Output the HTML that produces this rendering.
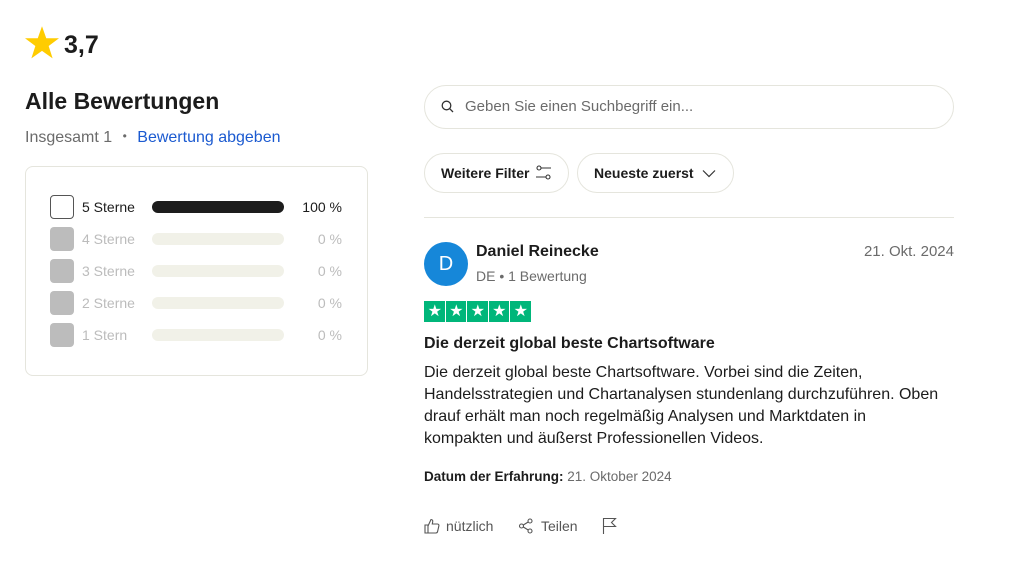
<!DOCTYPE html>
<html><head><meta charset="utf-8"><style>
*{margin:0;padding:0;box-sizing:border-box}
body{width:1016px;height:571px;background:#fff;font-family:"Liberation Sans",Arial,sans-serif;color:#1c1c1c;position:relative;overflow:hidden}
.a{position:absolute;white-space:nowrap}
.row{position:absolute;left:50px;height:24px;width:300px}
.cb{position:absolute;left:0;top:0;width:24px;height:24px;border-radius:4px;background:#bcbcbc}
.lb{position:absolute;left:32px;top:4px;font-size:14px;color:#bcbcbc}
.bar{position:absolute;left:102px;top:6px;width:132px;height:12px;border-radius:6px;background:#f1f1e8}
.pc{position:absolute;right:8px;top:4px;font-size:14px;color:#bcbcbc}
.btn{position:absolute;top:153px;height:40px;border:1px solid #e5e5dd;border-radius:20px;font-size:14px;font-weight:bold;padding:11px 0 0 16px}
.st{position:absolute;top:301px;width:20.5px;height:21px;background:#00b67a}
</style></head><body>
<svg class="a" style="left:25px;top:26px" width="34" height="33" viewBox="0 0 24 23"><path d="M12 0l3 8.5h9l-7.3 5.5 2.8 8.7L12 17.4l-7.5 5.3 2.8-8.7L0 8.5h9z" fill="#ffcc00"/></svg>
<div class="a" style="left:64px;top:31px;font-size:25px;font-weight:bold">3,7</div>
<div class="a" style="left:25px;top:88px;font-size:23px;font-weight:bold">Alle Bewertungen</div>
<div class="a" style="left:25px;top:129px;font-size:16px;color:#6b6b6b">Insgesamt 1 <span style="margin:0 6px;font-size:12px;position:relative;top:-2px">•</span> <span style="color:#1b5ad0">Bewertung abgeben</span></div>
<div class="a" style="left:25px;top:166px;width:343px;height:210px;border:1px solid #e5e5dd;border-radius:8px"></div>
<div class="row" style="top:195px"><div class="cb" style="background:#fff;border:1px solid #555"></div><div class="lb" style="color:#1c1c1c">5 Sterne</div><div class="bar" style="background:#1c1c1c"></div><div class="pc" style="color:#1c1c1c">100 %</div></div>
<div class="row" style="top:227px"><div class="cb"></div><div class="lb">4 Sterne</div><div class="bar"></div><div class="pc">0 %</div></div>
<div class="row" style="top:259px"><div class="cb"></div><div class="lb">3 Sterne</div><div class="bar"></div><div class="pc">0 %</div></div>
<div class="row" style="top:291px"><div class="cb"></div><div class="lb">2 Sterne</div><div class="bar"></div><div class="pc">0 %</div></div>
<div class="row" style="top:323px"><div class="cb"></div><div class="lb">1 Stern</div><div class="bar"></div><div class="pc">0 %</div></div>

<div class="a" style="left:424px;top:85px;width:530px;height:44px;border:1px solid #e5e5dd;border-radius:22px"></div>
<svg class="a" style="left:441px;top:100px" width="13" height="13" viewBox="0 0 13 13"><circle cx="5.5" cy="5.5" r="4.3" fill="none" stroke="#333" stroke-width="1.3"/><path d="M8.6 8.6L12 12" stroke="#333" stroke-width="1.3"/></svg>
<div class="a" style="left:465px;top:98px;font-size:15px;color:#6b6b6b">Geben Sie einen Suchbegriff ein...</div>
<div class="btn" style="left:424px;width:145px">Weitere Filter</div>
<svg class="a" style="left:535px;top:164px" width="18" height="18" viewBox="0 0 18 18"><circle cx="4" cy="4" r="2" fill="none" stroke="#333" stroke-width="1.1"/><path d="M6 4h10M1 13h10" stroke="#333" stroke-width="1.1"/><circle cx="13" cy="13" r="2" fill="none" stroke="#333" stroke-width="1.1"/></svg>
<div class="btn" style="left:577px;width:157px">Neueste zuerst</div>
<svg class="a" style="left:702px;top:169px" width="14" height="9" viewBox="0 0 14 9"><path d="M1 1.5l6 6 6-6" fill="none" stroke="#333" stroke-width="1.2"/></svg>
<div class="a" style="left:424px;top:217px;width:530px;height:1px;background:#e5e5dd"></div>

<div class="a" style="left:424px;top:242px;width:44px;height:44px;border-radius:50%;background:#1687d9;color:#fff;font-size:20px;text-align:center;line-height:44px">D</div>
<div class="a" style="left:476px;top:243px;font-size:16px;font-weight:bold">Daniel Reinecke</div>
<div class="a" style="left:476px;top:268px;font-size:14px;color:#6b6b6b">DE • 1 Bewertung</div>
<div class="a" style="right:62px;top:243px;font-size:15px;color:#6b6b6b">21. Okt. 2024</div>
<div class="st" style="left:424px"></div><div class="st" style="left:445.5px"></div><div class="st" style="left:467px"></div><div class="st" style="left:488.5px"></div><div class="st" style="left:510px"></div>
<div class="a" style="left:424px;top:301px;font-size:16px;line-height:21px;color:#fff"><span style="display:inline-block;width:21.5px;text-align:center">★</span><span style="display:inline-block;width:21.5px;text-align:center">★</span><span style="display:inline-block;width:21.5px;text-align:center">★</span><span style="display:inline-block;width:21.5px;text-align:center">★</span><span style="display:inline-block;width:21.5px;text-align:center">★</span></div>
<div class="a" style="left:424px;top:335px;font-size:16px;font-weight:bold">Die derzeit global beste Chartsoftware</div>
<div class="a" style="left:424px;top:362px;font-size:16px;line-height:22px;white-space:normal;width:540px">Die derzeit global beste Chartsoftware. Vorbei sind die Zeiten,<br>Handelsstrategien und Chartanalysen stundenlang durchzuführen. Oben<br>drauf erhält man noch regelmäßig Analysen und Marktdaten in<br>kompakten und äußerst Professionellen Videos.</div>
<div class="a" style="left:424px;top:469px;font-size:13.5px"><b>Datum der Erfahrung:</b> <span style="color:#6b6b6b">21. Oktober 2024</span></div>
<svg class="a" style="left:424px;top:518px" width="16" height="16" viewBox="0 0 16 16"><path d="M1 7h3v8H1zM4 8l3-6.5c1.2 0 2 .8 1.7 2.2L8.3 6h5.2c1 0 1.6.9 1.4 1.8l-1.3 5.7c-.2.9-.9 1.5-1.8 1.5H4" fill="none" stroke="#555" stroke-width="1.1"/></svg>
<div class="a" style="left:446px;top:518px;font-size:14px;color:#555">nützlich</div>
<svg class="a" style="left:518px;top:518px" width="16" height="16" viewBox="0 0 16 16"><circle cx="3.5" cy="8" r="2" fill="none" stroke="#555" stroke-width="1.1"/><circle cx="12" cy="3" r="2" fill="none" stroke="#555" stroke-width="1.1"/><circle cx="12" cy="13" r="2" fill="none" stroke="#555" stroke-width="1.1"/><path d="M5.3 7l4.9-3M5.3 9l4.9 3" stroke="#555" stroke-width="1.1"/></svg>
<div class="a" style="left:541px;top:518px;font-size:14px;color:#555">Teilen</div>
<svg class="a" style="left:602px;top:517px" width="16" height="18" viewBox="0 0 16 18"><path d="M1.5 17V1.5h12l-4 4 4 4h-12" fill="none" stroke="#555" stroke-width="1.1"/></svg>
</body></html>
